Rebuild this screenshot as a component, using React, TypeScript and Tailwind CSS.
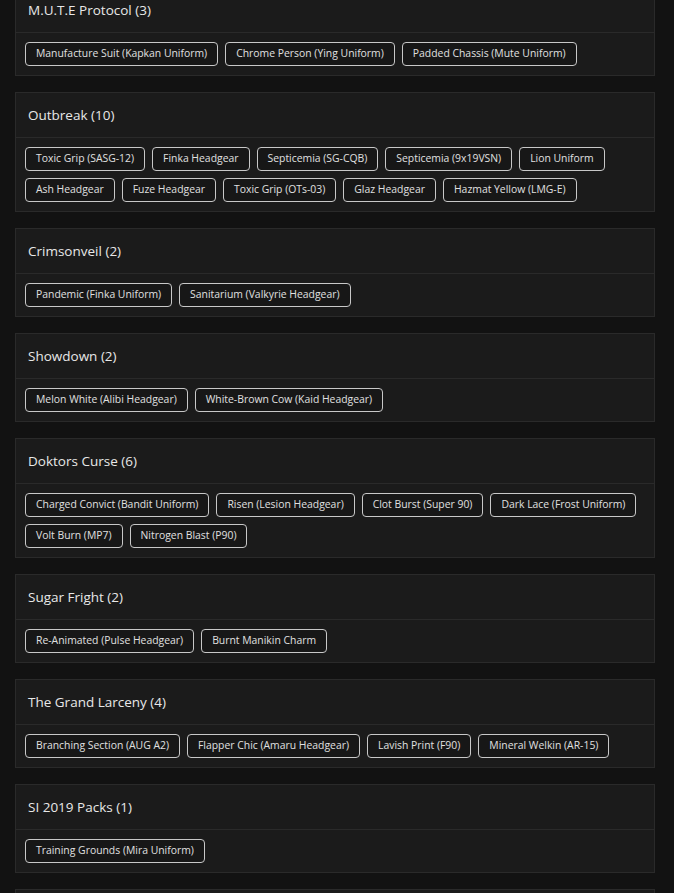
import React from "react";

const sections: { title: string; items: string[] }[] = [
  {
    title: "M.U.T.E Protocol (3)",
    items: [
      "Manufacture Suit (Kapkan Uniform)",
      "Chrome Person (Ying Uniform)",
      "Padded Chassis (Mute Uniform)",
    ],
  },
  {
    title: "Outbreak (10)",
    items: [
      "Toxic Grip (SASG-12)",
      "Finka Headgear",
      "Septicemia (SG-CQB)",
      "Septicemia (9x19VSN)",
      "Lion Uniform",
      "Ash Headgear",
      "Fuze Headgear",
      "Toxic Grip (OTs-03)",
      "Glaz Headgear",
      "Hazmat Yellow (LMG-E)",
    ],
  },
  {
    title: "Crimsonveil (2)",
    items: ["Pandemic (Finka Uniform)", "Sanitarium (Valkyrie Headgear)"],
  },
  {
    title: "Showdown (2)",
    items: ["Melon White (Alibi Headgear)", "White-Brown Cow (Kaid Headgear)"],
  },
  {
    title: "Doktors Curse (6)",
    items: [
      "Charged Convict (Bandit Uniform)",
      "Risen (Lesion Headgear)",
      "Clot Burst (Super 90)",
      "Dark Lace (Frost Uniform)",
      "Volt Burn (MP7)",
      "Nitrogen Blast (P90)",
    ],
  },
  {
    title: "Sugar Fright (2)",
    items: ["Re-Animated (Pulse Headgear)", "Burnt Manikin Charm"],
  },
  {
    title: "The Grand Larceny (4)",
    items: [
      "Branching Section (AUG A2)",
      "Flapper Chic (Amaru Headgear)",
      "Lavish Print (F90)",
      "Mineral Welkin (AR-15)",
    ],
  },
  {
    title: "SI 2019 Packs (1)",
    items: ["Training Grounds (Mira Uniform)"],
  },
  {
    title: "",
    items: [],
  },
];

export default function App() {
  return (
    <div
      className="h-[893px] overflow-hidden bg-[#121212] pl-[15px]"
      style={{ fontFamily: '"Open Sans", "Noto Sans", sans-serif' }}
    >
      <div className="-mt-[13px] flex w-[640px] flex-col gap-4">
        {sections.map((s, i) => (
          <div key={i} className="border border-[#2a2a2a] bg-[#1b1b1b]">
            <div className="flex h-[45px] items-center border-b border-[#2a2a2a] px-[12px]">
              <span className="text-[13.5px] font-medium text-[#e8e8e8]">{s.title}</span>
            </div>
            <div className="flex min-h-[42px] flex-wrap gap-[7px] p-[9px]">
              {s.items.map((it) => (
                <span
                  key={it}
                  className="flex h-[24px] items-center rounded-[4px] border border-[#c8c8c8] bg-[#171717] px-[10px] text-[10.4px] text-[#e0e0e0]"
                >
                  {it}
                </span>
              ))}
            </div>
          </div>
        ))}
      </div>
    </div>
  );
}
